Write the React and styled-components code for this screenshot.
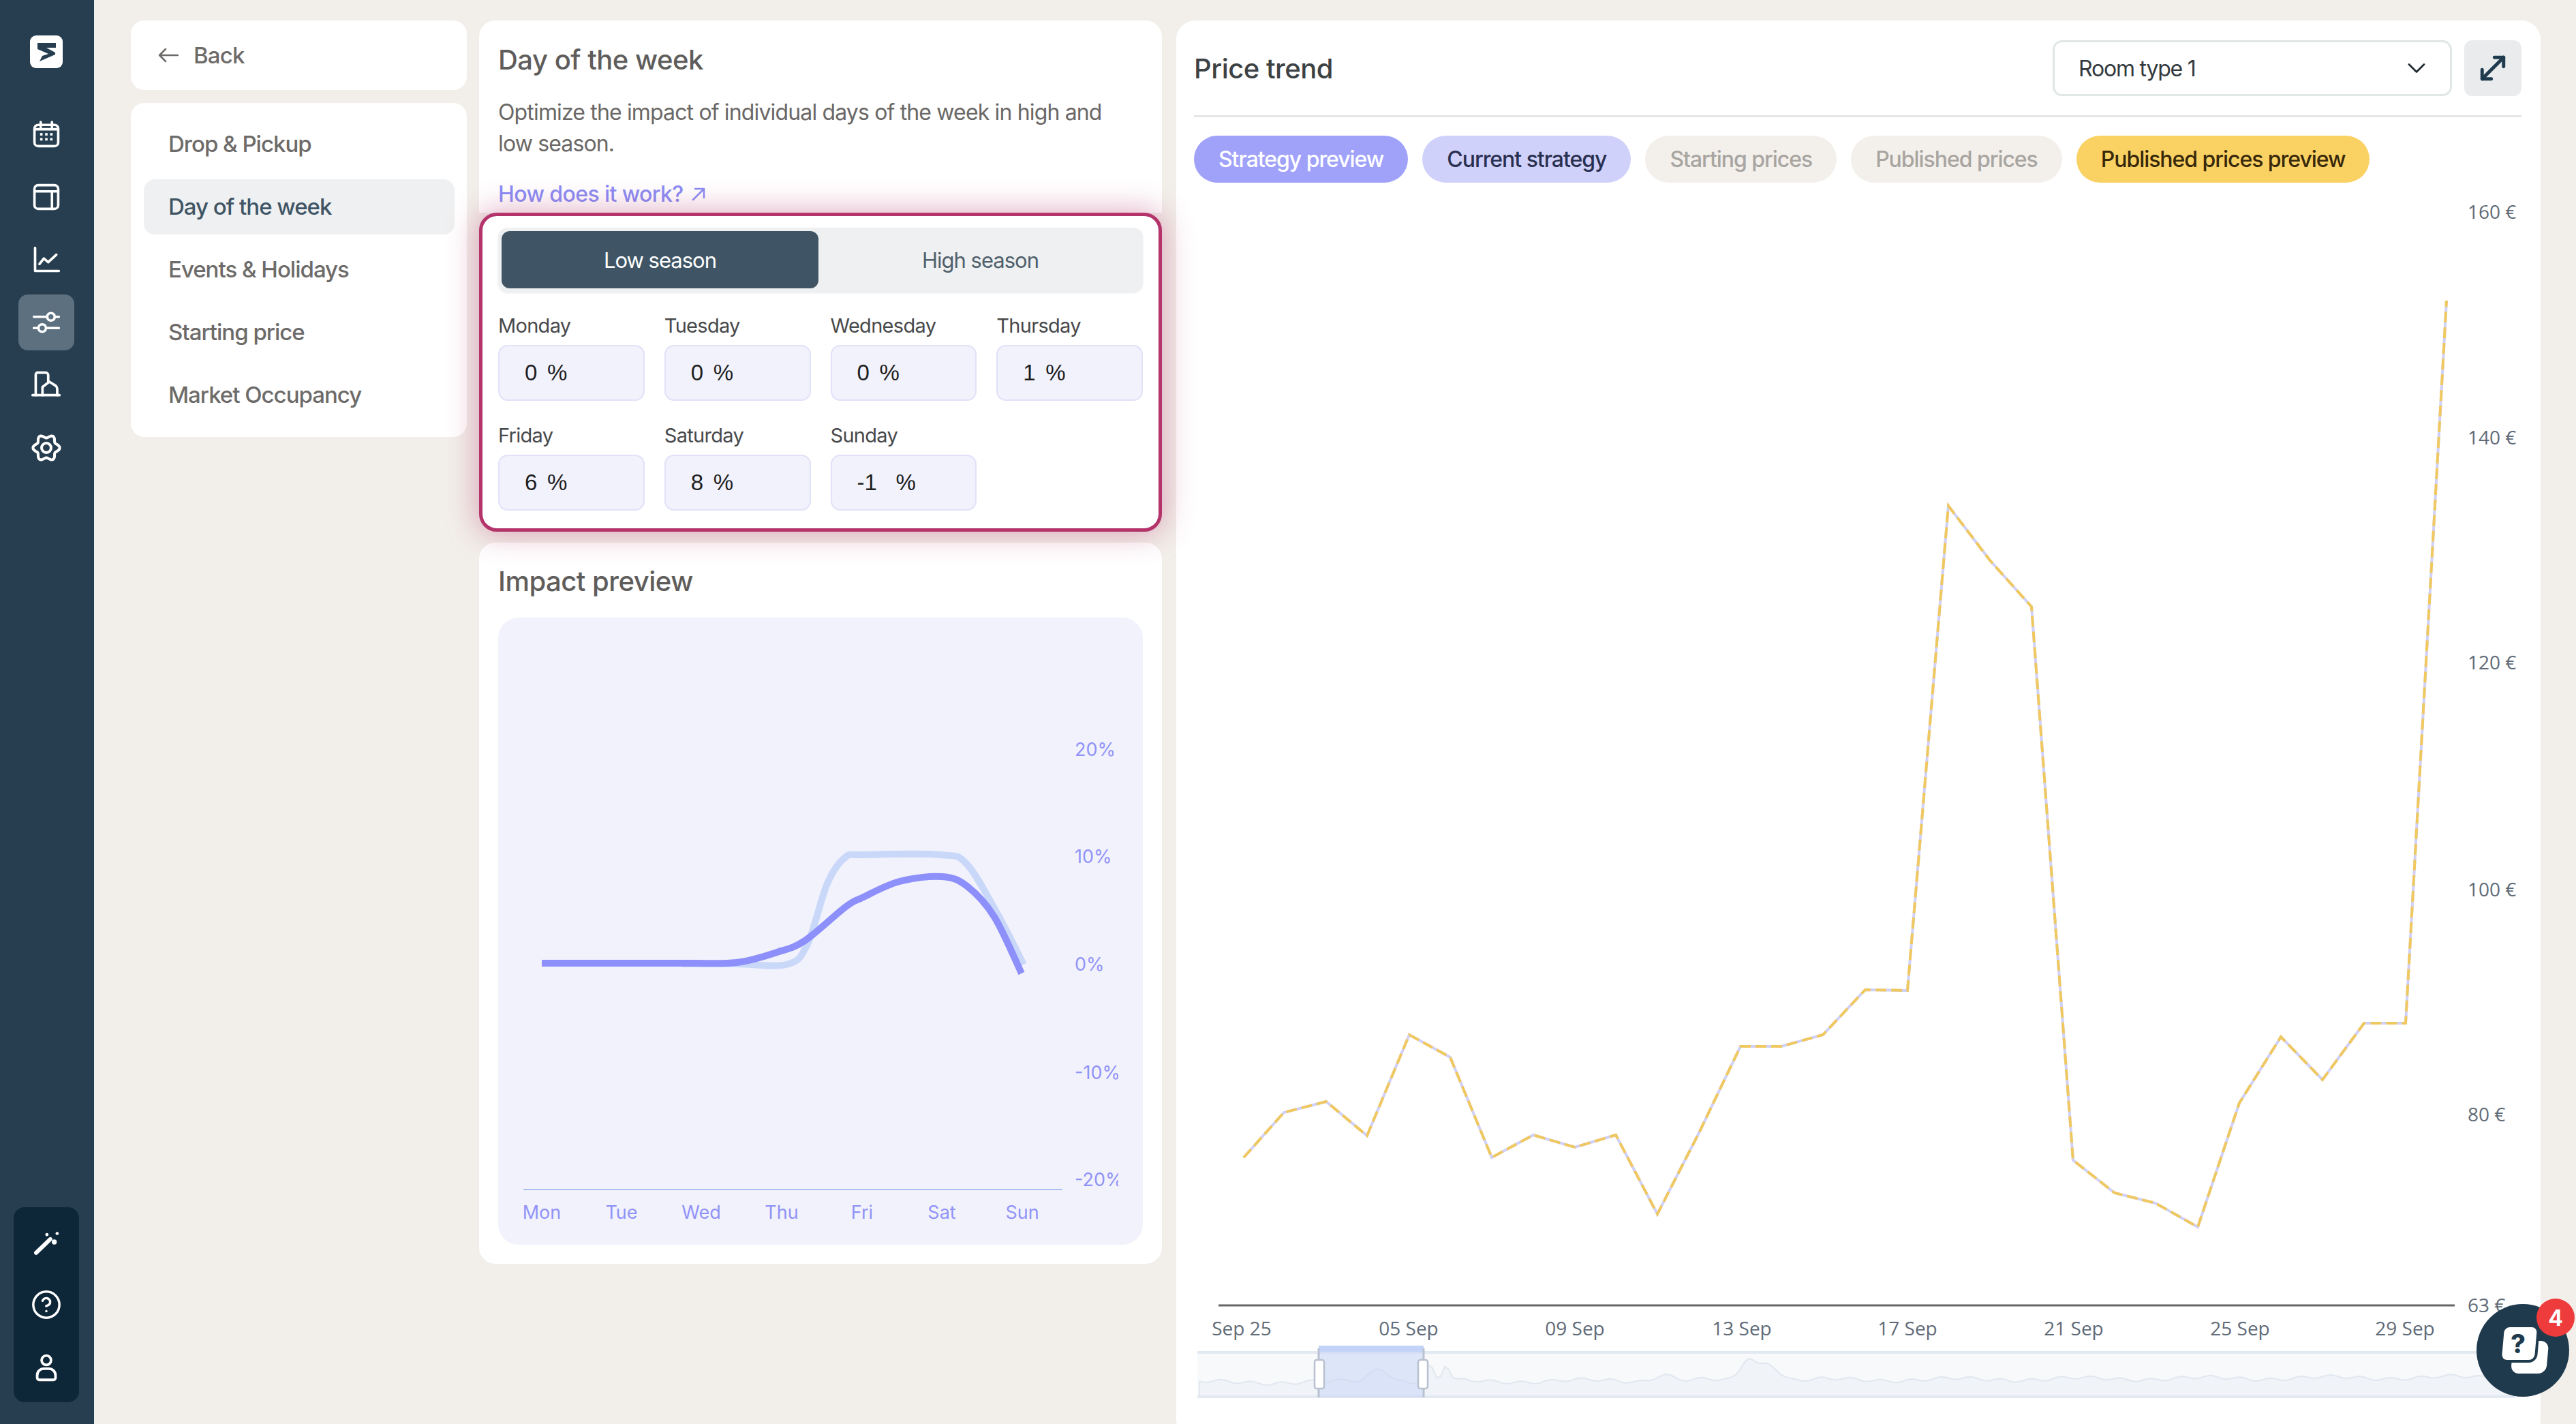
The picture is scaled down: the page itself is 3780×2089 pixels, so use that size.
import React from 'react';
import styled, { createGlobalStyle } from 'styled-components';
import { ChevronDown, CircleHelp, MoveDiagonal } from 'lucide-react';

const GlobalStyle = createGlobalStyle`
  html, body {
    margin: 0;
    background: #f2efea;
    font-family: Inter, "Noto Sans", sans-serif;
  }
  * { box-sizing: border-box; }
`;

const Shell = styled.div`
  position: relative;
  display: grid;
  grid-template-columns: 138px 1fr;
  grid-template-rows: 2089px;
  height: 2089px;
  overflow: hidden;
`;

const Sidebar = styled.aside`
  display: flex;
  flex-direction: column;
  align-items: center;
  height: 2089px;
  background: #263e50;
  border-right: 2px solid #1b4152;
  padding: 52px 0 32px;
`;

const Logo = styled.svg`
  width: 48px;
  height: 48px;
  margin-bottom: 56px;
`;

const SideNav = styled.nav`
  display: flex;
  flex-direction: column;
  gap: 10px;
`;

const SideItem = styled.div`
  width: 82px;
  height: 82px;
  display: flex;
  align-items: center;
  justify-content: center;
  border-radius: 14px;
  color: #fff;
  background: ${p => (p.$active ? '#5c7080' : 'transparent')};
`;

const BottomBox = styled.div`
  margin-top: auto;
  width: 96px;
  padding: 5px 0;
  border-radius: 16px;
  background: #0d2638;
`;

const BottomItem = styled.div`
  height: 92px;
  display: flex;
  align-items: center;
  justify-content: center;
  color: #fff;
`;

const Main = styled.main`
  display: flex;
  align-items: flex-start;
  height: 2089px;
  padding: 30px 0 0 54px;
`;

const LeftColumn = styled.div`
  width: 493px;
  display: flex;
  flex-direction: column;
  gap: 19px;
`;

const BackCard = styled.div`
  height: 102px;
  display: flex;
  align-items: center;
  gap: 22px;
  padding-left: 40px;
  background: #fff;
  border-radius: 20px;
  color: #6d6b69;
  font-size: 33px;
  font-weight: 500;
  letter-spacing: -0.8px;
`;

const MenuCard = styled.div`
  display: flex;
  flex-direction: column;
  gap: 11px;
  padding: 20px 18px 21px 19px;
  background: #fff;
  border-radius: 20px;
`;

const MenuItem = styled.div`
  height: 81px;
  display: flex;
  align-items: center;
  padding: 0 0 2px 36px;
  border-radius: 16px;
  font-size: 33px;
  font-weight: 500;
  letter-spacing: -1px;
  color: ${p => (p.$active ? '#3f5565' : '#6d6b69')};
  background: ${p => (p.$active ? '#eff0f1' : 'transparent')};
`;

const MiddleColumn = styled.div`
  width: 1002px;
  margin-left: 18px;
  display: flex;
  flex-direction: column;
`;

const IntroCard = styled.section`
  height: 282px;
  padding: 34px 28px 0;
  background: #fff;
  border-radius: 24px 24px 0 0;
`;

const CardTitle = styled.h2`
  margin: 0;
  font-size: 40px;
  line-height: 48px;
  font-weight: 500;
  letter-spacing: -0.5px;
  color: #5f5d5b;
`;

const Description = styled.p`
  max-width: 920px;
  margin: 30px 0 0;
  font-size: 32px;
  line-height: 46px;
  letter-spacing: -0.85px;
  color: #6a6866;
`;

const HowLink = styled.a`
  display: flex;
  align-items: center;
  gap: 12px;
  margin-top: 28px;
  font-size: 32px;
  line-height: 46px;
  font-weight: 500;
  letter-spacing: -0.6px;
  color: #8a8df5;
`;

const Highlight = styled.section`
  position: relative;
  z-index: 2;
  height: 468px;
  padding: 17px 23px 0;
  background: #fff;
  border: 5px solid #b3336a;
  border-radius: 26px;
  box-shadow: 0 0 44px 4px rgba(179, 51, 106, 0.38);
`;

const SeasonTabs = styled.div`
  display: grid;
  grid-template-columns: 465px 1fr;
  height: 94px;
  padding: 5px;
  margin-bottom: 30px;
  background: #eff0f1;
  border-radius: 14px;
  box-shadow: 0 2px 3px rgba(0, 0, 0, 0.08);
`;

const SeasonTab = styled.div`
  display: flex;
  align-items: center;
  justify-content: center;
  padding-left: ${p => (p.$active ? '0' : '4px')};
  border-radius: 12px;
  font-size: 31px;
  letter-spacing: -1px;
  color: ${p => (p.$active ? '#fff' : '#50606c')};
  background: ${p => (p.$active ? '#3f5565' : 'transparent')};
`;

const DayGrid = styled.div`
  display: grid;
  grid-template-columns: repeat(4, 1fr);
  gap: 31px 29px;
`;

const DayField = styled.div`
  display: flex;
  flex-direction: column;
  gap: 8px;
`;

const DayLabel = styled.label`
  font-size: 29px;
  line-height: 40px;
  letter-spacing: -0.7px;
  color: #47494b;
`;

const DayInput = styled.div`
  height: 82px;
  display: flex;
  align-items: center;
  padding-left: 37px;
  background: #f2f2fd;
  border: 2px solid #e1e1f8;
  border-radius: 14px;
  font-family: "Liberation Sans", Arial, sans-serif;
  font-size: 33px;
  color: #1e1e1e;
`;

const DayValue = styled.span`
  width: ${p => (p.$wide ? '57px' : '33px')};
`;

const ImpactCard = styled.section`
  margin-top: 16px;
  height: 1058px;
  padding: 33px 28px 28px;
  background: #fff;
  border-radius: 24px;
`;

const ImpactPanel = styled.div`
  margin-top: 29px;
  height: 920px;
  background: #f2f2fc;
  border-radius: 30px;
  overflow: hidden;
`;

const PriceCard = styled.section`
  flex: none;
  width: 2002px;
  height: 2080px;
  margin-left: 21px;
  padding: 29px 28px 0 26px;
  background: #fff;
  border-radius: 28px;
  overflow: hidden;
`;

const PriceHeader = styled.header`
  display: flex;
  align-items: center;
  gap: 18px;
  padding-bottom: 28px;
  border-bottom: 3px solid #e4e5e5;
`;

const PriceTitle = styled.h1`
  margin: 0 auto 0 0;
  font-size: 40px;
  font-weight: 500;
  letter-spacing: -0.5px;
  color: #3c4144;
`;

const RoomSelect = styled.div`
  width: 586px;
  height: 82px;
  display: flex;
  align-items: center;
  justify-content: space-between;
  padding: 0 27px 0 35px;
  border: 3px solid #e1e6e6;
  border-radius: 14px;
  font-size: 32px;
  letter-spacing: -1.2px;
  color: #333a3f;
`;

const ExpandButton = styled.div`
  width: 84px;
  height: 82px;
  display: flex;
  align-items: center;
  justify-content: center;
  border-radius: 12px;
  background: #e9ebed;
  color: #1f3b4d;
`;

const ChipRow = styled.div`
  display: flex;
  gap: 21px;
  margin-top: 27px;
`;

const Chip = styled.div`
  height: 69px;
  display: flex;
  align-items: center;
  padding: 0 36px;
  border-radius: 35px;
  font-size: 32px;
  font-weight: 500;
  letter-spacing: -1.05px;
  color: ${p => p.$fg};
  background: ${p => p.$bg};
`;

const PriceSvg = styled.svg`
  display: block;
  margin-left: -26px;
`;

const ChatBubble = styled.div`
  position: absolute;
  left: 3634px;
  top: 1913px;
  width: 136px;
  height: 136px;
  border-radius: 50%;
  background: #1f3a4d;
`;

const ChatBadge = styled.div`
  position: absolute;
  left: 88px;
  top: -8px;
  width: 56px;
  height: 56px;
  display: flex;
  align-items: center;
  justify-content: center;
  border-radius: 50%;
  background: #ee3b3b;
  color: #fff;
  font-size: 32px;
  font-weight: 700;
`;

const Axis = styled.text`
  font-family: ${p => (p.$open ? '"Open Sans"' : 'Inter')}, sans-serif;
  font-size: ${p => (p.$open ? '28px' : '27px')};
  fill: ${p => (p.$open ? '#5f6b78' : '#9093f7')};
`;

const days = [
  ['Monday', '0'], ['Tuesday', '0'], ['Wednesday', '0'], ['Thursday', '1'],
  ['Friday', '6'], ['Saturday', '8'], ['Sunday', '-1'],
];

const chips = [
  ['Strategy preview', '#a0a2fa', '#fff'],
  ['Current strategy', '#d0d1fb', '#29304f'],
  ['Starting prices', '#f3f0ec', '#a8a5a1'],
  ['Published prices', '#f3f0ec', '#a8a5a1'],
  ['Published prices preview', '#fad264', '#38280a'],
];

const pricePoints = [
  [1825, 1698], [1884, 1632], [1946, 1616], [2006, 1666], [2068, 1518], [2128, 1551],
  [2189, 1698], [2250, 1665], [2311, 1683], [2371, 1665], [2432, 1781], [2493, 1662],
  [2554, 1535], [2614, 1535], [2675, 1518], [2737, 1452], [2799, 1453], [2859, 742],
  [2920, 822], [2981, 890], [3042, 1702], [3103, 1750], [3163, 1765], [3225, 1800],
  [3286, 1618], [3347, 1521], [3408, 1584], [3469, 1501], [3530, 1501], [3590, 441],
];

const priceY = [['160 €', 311], ['140 €', 642], ['120 €', 972], ['100 €', 1305], ['80 €', 1635], ['63 €', 1915]];
const priceX = [['Sep 25', 1822], ['05 Sep', 2067], ['09 Sep', 2311], ['13 Sep', 2556], ['17 Sep', 2799], ['21 Sep', 3043], ['25 Sep', 3287], ['29 Sep', 3529]];

const strategyLine = [
  [795, 1413], [1000, 1413], [1081, 1412], [1140, 1397], [1181, 1380], [1240, 1331], [1265, 1317],
  [1320, 1293], [1382, 1286], [1419, 1300], [1459, 1345], [1499, 1428],
];
const currentLine = [
  [1000, 1414], [1081, 1414], [1154, 1415], [1184, 1387], [1214, 1296], [1240, 1258], [1267, 1254],
  [1380, 1254], [1419, 1268], [1466, 1345], [1502, 1415],
];

const impactY = [['20%', 1099], ['10%', 1256], ['0%', 1414], ['-10%', 1573], ['-20%', 1730]];
const impactX = [['Mon', 795], ['Tue', 912], ['Wed', 1029], ['Thu', 1147], ['Fri', 1265], ['Sat', 1382], ['Sun', 1500]];

// catmull-rom through the points, good enough for the preview curves
const smooth = pts => {
  let d = `M${pts[0][0]} ${pts[0][1]}`;
  for (let i = 0; i < pts.length - 1; i++) {
    const p0 = pts[i - 1] || pts[i];
    const p1 = pts[i];
    const p2 = pts[i + 1];
    const p3 = pts[i + 2] || p2;
    const c1 = [p1[0] + (p2[0] - p0[0]) / 6, p1[1] + (p2[1] - p0[1]) / 6];
    const c2 = [p2[0] - (p3[0] - p1[0]) / 6, p2[1] - (p3[1] - p1[1]) / 6];
    d += `C${c1[0]} ${c1[1]} ${c2[0]} ${c2[1]} ${p2[0]} ${p2[1]}`;
  }
  return d;
};

// small overview series of the brush
const spikes = [[2025, 20, 14], [2098, 24, 5], [2122, 24, 5], [2440, 10, 12], [2565, 32, 10], [2595, 26, 14]];
const brushLine = () => {
  const pts = [];
  for (let x = 1760; x <= 3690; x += 6) {
    let y = 2028 - (x - 1760) * 0.004 + Math.sin(x / 7) * 2.2 + Math.sin(x / 29) * 2.2;
    spikes.forEach(([cx, h, w]) => {
      y -= h * Math.exp(-((x - cx) ** 2) / (2 * w * w));
    });
    pts.push(`${x} ${y.toFixed(1)}`);
  }
  return pts;
};

// six soft lobes, sampled in polar form
const gearPath = () => {
  const pts = [];
  for (let i = 0; i < 72; i++) {
    const a = (i * 5 * Math.PI) / 180;
    const r = 9.3 + 1.4 * Math.cos(6 * a);
    pts.push(`${(12 + r * Math.cos(a)).toFixed(2)} ${(12 + r * Math.sin(a)).toFixed(2)}`);
  }
  return `M${pts.join('L')}Z`;
};

const Icon = ({ children, size = 44 }) => (
  <svg width={size} height={size} viewBox="0 0 24 24" fill="none" stroke="currentColor" strokeWidth="2" strokeLinecap="round" strokeLinejoin="round">
    {children}
  </svg>
);

const CalendarIcon = () => (
  <Icon>
    <rect x="2.5" y="4.5" width="19" height="17" rx="3" />
    <path d="M7.5 2.200v4M16.500 2.200v4M2.500 8h19" />
    <g fill="currentColor" stroke="none">
      <rect x="7" y="11" width="2" height="2" />
      <rect x="11" y="11" width="2" height="2" />
      <rect x="15" y="11" width="2" height="2" />
      <rect x="7" y="15" width="2" height="2" />
      <rect x="11" y="15" width="2" height="2" />
      <rect x="15" y="15" width="2" height="2" />
    </g>
  </Icon>
);

const LayoutIcon = () => (
  <Icon>
    <rect x="2.5" y="2.5" width="19" height="19" rx="3" />
    <path d="M2.500 7.500h19M16.500 7.500v14" />
  </Icon>
);

const TrendIcon = () => (
  <Icon>
    <path d="M3 2.500V21h19" />
    <path d="M6.500 15.500 10 11l3.500 3L20 8" />
  </Icon>
);

const SlidersIcon = () => (
  <Icon>
    <path d="M2 7.500h10.500M19 7.500h3M2 16.500h3.500M12 16.500h10" />
    <circle cx="15.700" cy="7.500" r="3" />
    <circle cx="8.700" cy="16.500" r="3" />
  </Icon>
);

const BuildingIcon = () => (
  <Icon>
    <path d="M1 20H22.500" />
    <path d="M3.500 20V3.500A1.500 1.500 0 0 1 5 2h6.500a2 2 0 0 1 2 2v5.300" />
    <path d="M8.900 20V13.500L14.400 9.300 19.500 12.500Q20.700 13.500 20.700 15V20" />
  </Icon>
);

const GearIcon = () => (
  <Icon>
    <path d={gearPath()} strokeWidth="2.200" />
    <circle cx="12" cy="12" r="3.800" strokeWidth="2.200" />
  </Icon>
);

const WandIcon = () => (
  <svg width="40" height="40" viewBox="0 0 24 24" fill="none" stroke="currentColor" strokeLinecap="round">
    <path d="M3 21.500 15.500 9.500" strokeWidth="3.600" />
    <g fill="currentColor" stroke="none">
      <circle cx="12.500" cy="5.500" r="1.400" />
      <circle cx="21.500" cy="4.500" r="1.400" />
      <circle cx="19" cy="12" r="2.200" />
    </g>
  </svg>
);

const UserIcon = () => (
  <Icon size={46}>
    <circle cx="12" cy="6.500" r="3.600" />
    <path d="M6.500 21.500A1.500 1.500 0 0 1 5 20v-2a5 5 0 0 1 5-5h4a5 5 0 0 1 5 5v2a1.500 1.500 0 0 1-1.500 1.500z" />
  </Icon>
);

const ImpactChart = () => (
  <svg width="947" height="920" viewBox="731 906 947 920" fill="none">
    <defs>
      <clipPath id="yLabels">
        <rect x="1570" y="1000" width="71" height="800" />
      </clipPath>
    </defs>
    <g clipPath="url(#yLabels)">
      {impactY.map(([label, y]) => (
        <Axis key={label} x="1577" y={y + 10}>{label}</Axis>
      ))}
    </g>
    <path d="M768 1745H1559" stroke="#a9c0f0" strokeWidth="2" />
    {impactX.map(([label, x]) => (
      <Axis key={label} x={x} y="1788" textAnchor="middle">{label}</Axis>
    ))}
    <path d={smooth(currentLine)} stroke="#c9d8f9" strokeWidth="10" />
    <path d={smooth(strategyLine)} stroke="#8d8ffa" strokeWidth="10" />
  </svg>
);

const PriceChart = () => {
  const line = pricePoints.map(p => p.join(' ')).join('L');
  const overview = brushLine();
  return (
    <PriceSvg width="2002" height="1830" viewBox="1726 268 2002 1830" fill="none">
      <path d={`M${line}`} stroke="#d0d1fb" strokeWidth="4" />
      <path d={`M${line}`} stroke="#f0c860" strokeWidth="4" strokeDasharray="16 7" />
      {priceY.map(([label, y]) => (
        <Axis key={label} $open x="3621" y={y + 10}>{label}</Axis>
      ))}
      <path d="M1788 1915H3602" stroke="#666" strokeWidth="3" />
      {priceX.map(([label, x]) => (
        <Axis key={label} $open x={x} y="1959" textAnchor="middle">{label}</Axis>
      ))}
      <rect x="1757" y="1982" width="1933" height="69" rx="6" fill="#f7f9fb" />
      <path d={`M${overview.join('L')}L3690 2050L1760 2050Z`} fill="#f0f3f8" stroke="#e2e7ef" strokeWidth="2" />
      <path d="M1757 1984H3690M1757 2049H3690" stroke="#e3e9f2" strokeWidth="4" />
      <rect x="1935" y="1974" width="154" height="76" fill="#c3d3f7" fillOpacity="0.5" />
      <rect x="1935" y="1974" width="154" height="9" fill="#c3d3f7" />
      <path d="M1935 1978V2050M2089 1978V2050" stroke="#b9c1d0" strokeWidth="3" />
      <rect x="1929" y="1995" width="14" height="42" rx="3" fill="#fff" stroke="#b9c1d0" strokeWidth="2.500" />
      <rect x="2081" y="1995" width="14" height="42" rx="3" fill="#fff" stroke="#b9c1d0" strokeWidth="2.500" />
    </PriceSvg>
  );
};

const ChatIcon = () => (
  <svg width="136" height="136" viewBox="0 0 136 136">
    <rect x="51" y="54" width="52" height="48" rx="12" fill="#fff" transform="skewX(-5) translate(8 0)" />
    <rect x="37" y="32" width="52" height="52" rx="10" fill="#fff" stroke="#1f3a4d" strokeWidth="4" transform="skewX(-5) translate(5 0)" />
    <text x="61" y="72" textAnchor="middle" fontFamily="Inter, sans-serif" fontWeight="800" fontSize="38" fill="#1f3a4d">?</text>
  </svg>
);

export default function App() {
  return (
    <>
      <GlobalStyle />
      <Shell>
        <Sidebar>
          <Logo viewBox="0 0 48 48">
            <rect width="48" height="48" rx="9" fill="#fff" />
            <path d="M11 11H38V18H24L37 25V28L14 38L18 30L27 27L11 20Z" fill="#263e50" />
          </Logo>
          <SideNav>
            <SideItem><CalendarIcon /></SideItem>
            <SideItem><LayoutIcon /></SideItem>
            <SideItem><TrendIcon /></SideItem>
            <SideItem $active><SlidersIcon /></SideItem>
            <SideItem><BuildingIcon /></SideItem>
            <SideItem><GearIcon /></SideItem>
          </SideNav>
          <BottomBox>
            <BottomItem><WandIcon /></BottomItem>
            <BottomItem><CircleHelp size={46} strokeWidth={1.8} /></BottomItem>
            <BottomItem><UserIcon /></BottomItem>
          </BottomBox>
        </Sidebar>
        <Main>
          <LeftColumn>
            <BackCard>
              <svg width="30" height="22" viewBox="0 0 30 22" fill="none" stroke="currentColor" strokeWidth="2.500" strokeLinecap="round" strokeLinejoin="round">
                <path d="M29 11H2M11 2 2 11l9 9" />
              </svg>
              Back
            </BackCard>
            <MenuCard>
              <MenuItem>Drop &amp; Pickup</MenuItem>
              <MenuItem $active>Day of the week</MenuItem>
              <MenuItem>Events &amp; Holidays</MenuItem>
              <MenuItem>Starting price</MenuItem>
              <MenuItem>Market Occupancy</MenuItem>
            </MenuCard>
          </LeftColumn>
          <MiddleColumn>
            <IntroCard>
              <CardTitle>Day of the week</CardTitle>
              <Description>
                Optimize the impact of individual days of the week in high and low season.
              </Description>
              <HowLink>
                How does it work?
                <svg width="20" height="20" viewBox="0 0 20 20" fill="none" stroke="currentColor" strokeWidth="2.500" strokeLinecap="round" strokeLinejoin="round">
                  <path d="M2 18 18 2M5 2h13v13" />
                </svg>
              </HowLink>
            </IntroCard>
            <Highlight>
              <SeasonTabs>
                <SeasonTab $active>Low season</SeasonTab>
                <SeasonTab>High season</SeasonTab>
              </SeasonTabs>
              <DayGrid>
                {days.map(([day, value]) => (
                  <DayField key={day}>
                    <DayLabel>{day}</DayLabel>
                    <DayInput>
                      <DayValue $wide={value.length > 1}>{value}</DayValue>%
                    </DayInput>
                  </DayField>
                ))}
              </DayGrid>
            </Highlight>
            <ImpactCard>
              <CardTitle>Impact preview</CardTitle>
              <ImpactPanel>
                <ImpactChart />
              </ImpactPanel>
            </ImpactCard>
          </MiddleColumn>
          <PriceCard>
            <PriceHeader>
              <PriceTitle>Price trend</PriceTitle>
              <RoomSelect>
                Room type 1
                <ChevronDown size={44} strokeWidth={1.5} color="#1f2b33" />
              </RoomSelect>
              <ExpandButton>
                <MoveDiagonal size={54} strokeWidth={2.2} />
              </ExpandButton>
            </PriceHeader>
            <ChipRow>
              {chips.map(([label, bg, fg]) => (
                <Chip key={label} $bg={bg} $fg={fg}>{label}</Chip>
              ))}
            </ChipRow>
            <PriceChart />
          </PriceCard>
        </Main>
        <ChatBubble>
          <ChatIcon />
          <ChatBadge>4</ChatBadge>
        </ChatBubble>
      </Shell>
    </>
  );
}
